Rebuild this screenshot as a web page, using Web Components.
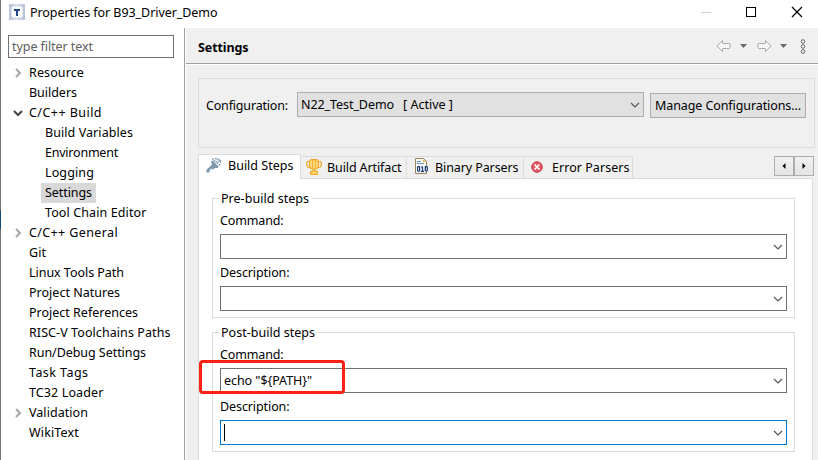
<!DOCTYPE html>
<html lang="en">
<head>
<meta charset="utf-8">
<title>Properties for B93_Driver_Demo</title>
<style>
html,body{margin:0;width:818px;height:460px;overflow:hidden;background:#fff}
body{font:12.5px/20px "Noto Sans","Open Sans",sans-serif;color:#000}
</style>
</head>
<body>
<properties-dialog></properties-dialog>
<script>
function define(name, html, setup) {
  const tpl = document.createElement('template');
  tpl.innerHTML = html;
  customElements.define(name, class extends HTMLElement {
    connectedCallback() {
      if (this.shadowRoot) return;
      this.attachShadow({mode: 'open'}).append(tpl.content.cloneNode(true));
      if (setup) setup(this, this.shadowRoot);
    }
  });
}

/* A one-line label whose tracking is adjusted to fill the width "w". */
define('fit-label', `<style>:host{display:inline-block;white-space:pre;flex:none}span{display:inline-block}</style><span><slot></slot></span>`, (el, root) => {
  const w = +el.getAttribute('w'), span = root.querySelector('span');
  const n = el.textContent.length;
  const natural = span.getBoundingClientRect().width;
  if (w && n > 1) span.style.letterSpacing = ((w - natural) / n) + 'px';
  if (w) el.style.width = (w + 1) + 'px';
});

define('chevron-icon', `<style>:host{display:block;width:10px;height:10px;flex:none}svg{display:block;transform-origin:center}
:host([right]) svg{transform:rotate(-90deg)}path{fill:none;stroke:#555;stroke-width:1.2}
:host([tree]) path{stroke:#444;stroke-width:2}:host([right]) path{stroke:#a6a6a6!important}</style>
<svg width="10" height="10" viewBox="0 0 10 10"><path d="M1 3l4 4 4-4"/></svg>`);

define('tree-item', `<style>
:host{display:flex;height:20px;align-items:center;padding-left:12px}
i{width:10px;height:10px;margin-right:2px;flex:none}
span{display:block;height:20px;padding:0 4px}
:host([child]) i{margin-right:18px}
:host([selected]) span{background:#d9d9d9;padding-right:3px}
</style><i></i><span><slot></slot></span>`, (el, root) => {
  const s = el.getAttribute('state');
  if (s) root.querySelector('i').innerHTML = '<chevron-icon tree ' + (s === 'closed' ? 'right' : '') + '></chevron-icon>';
});

define('title-bar', `<style>
:host{display:flex;height:28px;align-items:center;padding-left:9px;box-sizing:border-box}
.app{width:16px;height:16px;margin:-4px 5px 0 0}fit-label{margin-top:-3px}
.win{margin:-4px 15px 0 auto}svg{display:block}
</style>
<svg class="app" viewBox="0 0 16 16"><defs><linearGradient id="g"><stop stop-color="#b5c2da"/><stop offset=".5" stop-color="#d8e0ed"/><stop offset="1" stop-color="#b5c2da"/></linearGradient></defs><rect width="16" height="16" fill="url(#g)"/><rect x="2.5" y="2.5" width="11" height="11" rx="2" fill="#fff"/><path d="M5 5h6v2H9v5H7V7H5z" fill="#24468d"/></svg>
<fit-label w="187.500">Properties for B93_Driver_Demo</fit-label>
<svg class="win" width="102" height="12" viewBox="0 0 102 12" fill="none"><path d="M0 6.5h10" stroke="#ccc"/><rect x="45.5" y="1.5" width="9" height="9" stroke="#000"/><path d="M91 1l10 10M101 1L91 11" stroke="#000" stroke-width="1.2"/></svg>`);

define('nav-tree', `<style>
:host{display:block;box-sizing:border-box;width:185px;border-right:1px solid #a0a0a0;border-left:1px solid #777;padding:7px 0 0}
.filter{box-sizing:border-box;width:166px;height:23px;border:1px solid #707070;margin:0 0 5px 7px;padding-left:3px;color:#606060;line-height:21px}
</style>
<div class="filter"><fit-label w="81">type filter text</fit-label></div>
<tree-item state="closed"><fit-label w="55">Resource</fit-label></tree-item>
<tree-item><fit-label w="48">Builders</fit-label></tree-item>
<tree-item state="open"><fit-label w="73">C/C++ Build</fit-label></tree-item>
<tree-item child><fit-label w="88">Build Variables</fit-label></tree-item>
<tree-item child><fit-label w="73">Environment</fit-label></tree-item>
<tree-item child><fit-label w="49">Logging</fit-label></tree-item>
<tree-item child selected><fit-label w="47">Settings</fit-label></tree-item>
<tree-item child><fit-label w="101.500">Tool Chain Editor</fit-label></tree-item>
<tree-item state="closed"><fit-label w="89">C/C++ General</fit-label></tree-item>
<tree-item><fit-label w="17">Git</fit-label></tree-item>
<tree-item><fit-label w="95">Linux Tools Path</fit-label></tree-item>
<tree-item><fit-label w="91">Project Natures</fit-label></tree-item>
<tree-item><fit-label w="109">Project References</fit-label></tree-item>
<tree-item><fit-label w="141.500">RISC-V Toolchains Paths</fit-label></tree-item>
<tree-item><fit-label w="117">Run/Debug Settings</fit-label></tree-item>
<tree-item><fit-label w="59.500">Task Tags</fit-label></tree-item>
<tree-item><fit-label w="74.500">TC32 Loader</fit-label></tree-item>
<tree-item state="closed"><fit-label w="59">Validation</fit-label></tree-item>
<tree-item><fit-label w="50">WikiText</fit-label></tree-item>`);

define('combo-box', `<style>
:host{display:flex;box-sizing:border-box;height:25px;border:1px solid #707070;background:#fff;align-items:center;justify-content:space-between;padding:0 3px 0 3px}
:host([gray]){background:#e1e1e1;border-color:#adadad;width:347px}
:host([focus]){border-color:#0078d7}
</style><slot></slot><chevron-icon style="margin-left:auto"></chevron-icon>`);

define('page-header', `<style>
:host{display:flex;height:35px;box-sizing:content-box;border-bottom:1px solid #a0a0a0;box-shadow:0 1px #fff;padding:0 12px 0 12px;align-items:center;justify-content:space-between}
fit-label{font-weight:700;margin-top:4px}svg{margin-top:1px}
</style><fit-label w="50.500">Settings</fit-label>
<svg width="90" height="18" viewBox="0 0 90 18" fill="none"><g stroke="#aaa" fill="#f8f8f8" stroke-linejoin="round"><path d="M1 9l5.5-5.5v3H13q1 0 1 1v3q0 1-1 1H6.500v3z"/><path d="M55 9l-5.500-5.500v3H43q-1 0-1 1v3q0 1 1 1h6.500v3z"/></g><path d="M24 7h7l-3.500 4zM64 7h7l-3.500 4z" fill="#666"/><g stroke="#666"><circle cx="87" cy="4.500" r="1.800"/><circle cx="87" cy="9.500" r="1.800"/><circle cx="87" cy="14.500" r="1.800"/></g></svg>`);

define('config-panel', `<style>
:host{display:flex;box-sizing:border-box;border:1px solid #dcdcdc;width:617px;height:70px;margin:14px 0 0 12px;padding:13px 8px 0 7px;align-items:flex-start}
.l{margin:4px 8px 0 0}.b{box-sizing:border-box;width:156px;height:25px;border:1px solid #adadad;background:#e1e1e1;margin:1px 0 0 6px;padding-left:4px;line-height:24px}
</style><fit-label class="l" w="82">Configuration:</fit-label>
<combo-box gray><fit-label w="93">N22_Test_Demo</fit-label><fit-label w="50" style="margin-left:8px">[ Active ]</fit-label></combo-box>
<div class="b"><fit-label w="146">Manage Configurations...</fit-label></div>`);

define('tab-item', `<style>
:host{display:flex;box-sizing:border-box;height:22px;border:1px solid #dcdcdc;border-left:0;border-bottom:0;padding-left:5px;align-items:center;background:#f0f0f0}
:host([active]){height:25px;margin-bottom:-1px;background:#fff;border-left:1px solid #dcdcdc;padding:0 0 2px 7px;z-index:1}
</style><slot name="icon"></slot><slot></slot>`);

define('group-box', `<style>
:host{display:block;box-sizing:border-box;width:583px;height:120px;border:1px solid #dcdcdc;padding:0 7px}
.h{width:max-content;background:#fff;margin:-10px 0 2px -1px;padding:0 2px 0 2px;height:20px}
</style><div class="h"><slot name="legend"></slot></div><slot></slot>`);

define('field-row', `<style>:host{display:block;height:52px}.l{height:23px}</style><div class="l"><slot name="label"></slot></div><slot></slot>`);

define('tab-folder', `<style>
:host{display:flex;flex-direction:column;width:617px;height:308px;margin:6px 0 0 12px}
.bar{display:flex;width:616px;height:24px;align-items:flex-end;flex:none}
.body{flex:1;box-sizing:border-box;width:615px;border:1px solid #dcdcdc;border-bottom:0;background:#fff;padding:19px 0 0 13px}
.scroll{margin:0 0 2px auto;display:flex;align-self:flex-end}
.scroll b{box-sizing:border-box;width:20px;height:20px;border:1px solid #adadad;display:flex;align-items:center;justify-content:center;background:linear-gradient(#f2f2f2,#e4e4e4)}
.scroll b+b{border-left-width:1px}
svg{display:block;flex:none}
group-box+group-box{margin-top:14px}
.caret{width:1px;height:17px;background:#000}
</style>
<div class="bar">
<tab-item active style="width:103px"><svg slot="icon" width="16" height="16" style="margin:0 7px 0 0;overflow:visible" viewBox="0 0 16 16"><path d="M1.500 12.500L6 8" stroke="#7c98af" stroke-width="2.400"/><path d="M.5 11.500h3v3h-3z" fill="#7c98af"/><path d="M5 2.500l2 .5 5 5v2H8.500l-1 1.500-2-.5-1-2L6 7z" fill="#7c98af"/><path d="M6 1.500l2-.8M9 .5l4 1M7.500 3.500l2-1.500M9.500 4.500l2-2M11 6l2-3M12.500 7.500L14.500 6M13 2.500h1.500v2.500" fill="none" stroke="#7c98af" stroke-width="1.300" stroke-dasharray="2 .5"/></svg><fit-label w="65.500" style="margin-left:-1px">Build Steps</fit-label></tab-item>
<tab-item style="width:106px"><svg slot="icon" width="16" height="16" style="margin:-2px 5px 0 0" viewBox="0 0 16 16"><path d="M4 2.500H1.500L.7 4v2.500l1.500 2H5M12 2.500h2.500l.8 1.500v2.500l-1.500 2H11" fill="none" stroke="#efa928" stroke-width="1.200"/><path d="M3.500 2.500L5 .7h6l1.500 1.800V8L10.500 10h-5l-2-2z" fill="#fcd978" stroke="#efa928" stroke-width="1.200"/><path d="M6.500 1v8M9.500 1v8" stroke="#efa928" stroke-width=".8"/><path d="M7 10.500h2v2h2.500v2.800h-7v-2.800H7z" fill="#fcd978" stroke="#efa928" stroke-width="1.200"/></svg><fit-label w="74.500">Build Artifact</fit-label></tab-item>
<tab-item style="width:117px"><svg slot="icon" width="16" height="16" style="margin:-3px 5px 0 3px" viewBox="0 0 16 16"><path d="M.5.5h8l3 3v12H.5z" fill="#f6f8fc" stroke="#98855a"/><path d="M8 1v3h3z" fill="#e9b750"/><path d="M2 3.500h4M2 5.500h7" stroke="#7390bf"/><path d="M2 8h11v6H2z" fill="#f6f8fc"/><g fill="none" stroke="#173d73" stroke-width="1.200"><rect x="2.600" y="8.600" width="2" height="4.500" rx=".5"/><path d="M6 9h1.500v4M6 13.300h3"/><rect x="10.300" y="8.600" width="2" height="4.500" rx=".5"/></g></svg><fit-label w="83.500" style="margin-left:-1px">Binary Parsers</fit-label></tab-item>
<tab-item style="width:109px"><svg slot="icon" width="12" height="12" style="margin:-1px 9px 0 2px" viewBox="0 0 12 12"><circle cx="6" cy="6" r="5.300" fill="#e25662" stroke="#c83c48"/><path d="M3.600 3.500l4.800 5M8.400 3.500l-4.800 5" stroke="#fff" stroke-width="1.700"/></svg><fit-label w="77.500">Error Parsers</fit-label></tab-item>
<div class="scroll"><b><svg width="4" height="6"><path d="M3.500 0v6L.5 3z"/></svg></b><b><svg width="4" height="6"><path d="M.5 0v6l3-3z"/></svg></b></div>
</div>
<div class="body">
<group-box><fit-label slot="legend" w="88">Pre-build steps</fit-label>
<field-row><fit-label slot="label" w="63.500">Command:</fit-label><combo-box></combo-box></field-row>
<field-row><fit-label slot="label" w="69.500">Description:</fit-label><combo-box></combo-box></field-row></group-box>
<group-box><fit-label slot="legend" w="94">Post-build steps</fit-label>
<field-row><fit-label slot="label" w="63.500">Command:</fit-label><combo-box><fit-label w="88">echo "\${PATH}"</fit-label></combo-box></field-row>
<field-row><fit-label slot="label" w="69.500">Description:</fit-label><combo-box focus><div class="caret"></div></combo-box></field-row></group-box>
</div>`);

define('properties-dialog', `<style>
:host{display:block;position:relative;width:818px;height:460px;overflow:hidden;background:#fff}
.main{display:flex;height:432px}
.page{flex:1;background:#f0f0f0;border-left:1px solid #fff}
.mark{position:absolute;box-sizing:border-box;left:199px;top:360px;width:146px;height:34px;border:3px solid #ff1f14;border-radius:4px}
.edge{position:absolute;left:0;top:0;width:1px;height:460px;background:linear-gradient(#777 210px,#174c78 210px,#174c78 229px,#777 229px)}
</style>
<title-bar></title-bar>
<div class="main"><nav-tree></nav-tree><div class="page"><page-header></page-header><config-panel></config-panel><tab-folder></tab-folder></div></div>
<div class="mark"></div><div class="edge"></div>`);
</script>
</body>
</html>
